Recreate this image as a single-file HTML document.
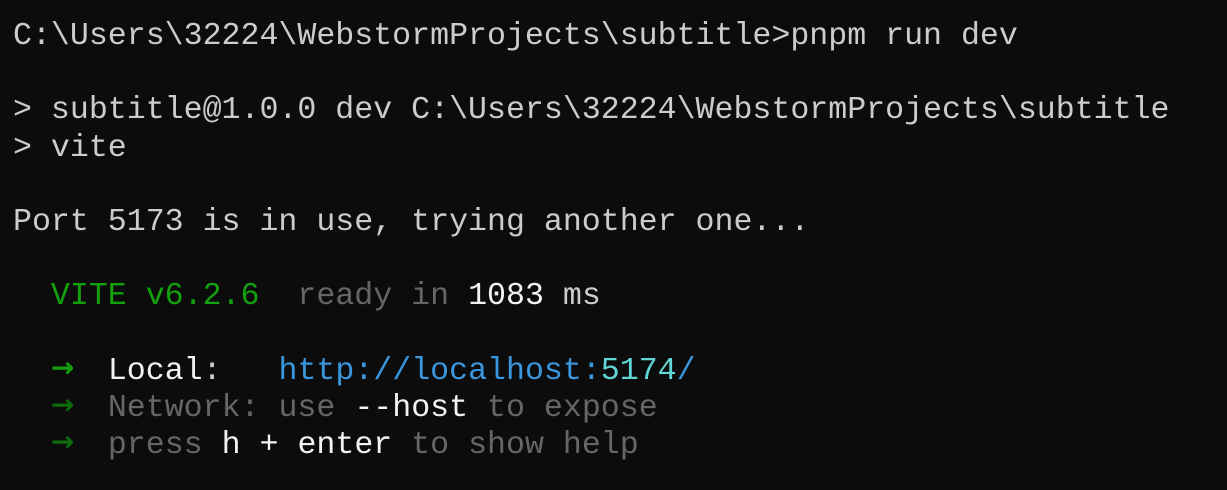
<!DOCTYPE html>
<html><head><meta charset="utf-8"><style>
html,body{margin:0;padding:0;background:#0c0c0c;width:1227px;height:490px;overflow:hidden}
pre{margin:0;position:absolute;left:13px;top:18px;font-family:"Liberation Mono","DejaVu Sans Mono",monospace;font-size:31.6px;line-height:37.2px;color:#cccccc;white-space:pre}
.g{color:#13a10e}.d{color:#666666}.w{color:#f2f2f2}.dg{color:#0d6b0a}.b{color:#3a96dd}.c{color:#61d6d6}
.a{display:inline-block;position:relative;top:-4px;width:19px;height:37.2px;line-height:37.2px;vertical-align:top;font-family:"DejaVu Sans",sans-serif;font-weight:bold;font-size:28px;text-align:center}
</style></head><body><pre>C:\Users\32224\WebstormProjects\subtitle&gt;pnpm run dev

&gt; subtitle@1.0.0 dev C:\Users\32224\WebstormProjects\subtitle
&gt; vite

Port 5173 is in use, trying another one...

  <span class="g">VITE v6.2.6</span>  <span class="d">ready in</span> <span class="w">1083</span> ms

  <span class="g a">→</span>  <span class="w">Local</span>:   <span class="b">http://localhost:</span><span class="c">5174</span><span class="b">/</span>
  <span class="dg a">→</span>  <span class="d">Network: use </span><span class="w">--host</span><span class="d"> to expose</span>
  <span class="dg a">→</span>  <span class="d">press </span><span class="w">h + enter</span><span class="d"> to show help</span></pre></body></html>
